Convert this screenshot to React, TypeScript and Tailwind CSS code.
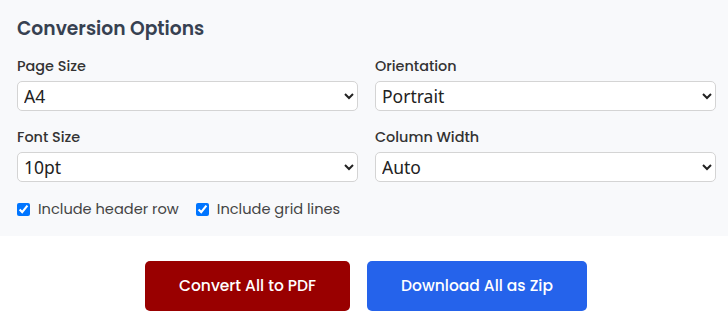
import React from 'react';

const sans = "font-['Poppins','Inter','Noto_Sans',sans-serif]";

interface FieldProps {
  label: string;
  value: string;
  options: string[];
}

function SelectField({ label, value, options }: FieldProps) {
  return (
    <div className="flex flex-col">
      <label className="text-[14.4px] leading-[20px] font-medium text-[#333] mb-[5px]">{label}</label>
      <select
        defaultValue={value}
        className="h-[30px] w-full rounded-[5px] border border-[#d4d4d4] bg-white px-[2px] text-[17.5px] text-[#222] font-['Noto_Sans','Liberation_Sans',sans-serif]"
      >
        {options.map((o) => (
          <option key={o}>{o}</option>
        ))}
      </select>
    </div>
  );
}

export default function App() {
  return (
    <div className={`w-[728px] h-[323px] bg-white overflow-hidden ${sans}`}>
      <div className="bg-[#f8f9fb] pl-[17px] pr-[12px] pt-[15px] h-[236px]">
        <h2 className="text-[18.7px] leading-[28px] font-semibold text-[#374151] mb-[13px]">Conversion Options</h2>
        <div className="grid grid-cols-2 gap-x-[17px] gap-y-[16px]">
          <SelectField label="Page Size" value="A4" options={['A4', 'Letter', 'Legal']} />
          <SelectField label="Orientation" value="Portrait" options={['Portrait', 'Landscape']} />
          <SelectField label="Font Size" value="10pt" options={['8pt', '10pt', '12pt']} />
          <SelectField label="Column Width" value="Auto" options={['Auto', 'Fixed']} />
        </div>
        <div className="flex items-center gap-[17px] mt-[17px] text-[14.6px] text-[#444]">
          <label className="flex items-center gap-[8px]">
            <input type="checkbox" defaultChecked className="w-[13px] h-[13px] m-0" />
            Include header row
          </label>
          <label className="flex items-center gap-[8px]">
            <input type="checkbox" defaultChecked className="w-[13px] h-[13px] m-0" />
            Include grid lines
          </label>
        </div>
      </div>
      <div className="flex justify-center gap-[17px] mt-[25px] pl-[4px]">
        <button className="h-[50px] w-[205px] rounded-[5px] bg-[#990000] text-white text-[15.5px] font-medium">
          Convert All to PDF
        </button>
        <button className="h-[50px] w-[220px] rounded-[5px] bg-[#2563eb] text-white text-[15.5px] font-medium">
          Download All as Zip
        </button>
      </div>
    </div>
  );
}
